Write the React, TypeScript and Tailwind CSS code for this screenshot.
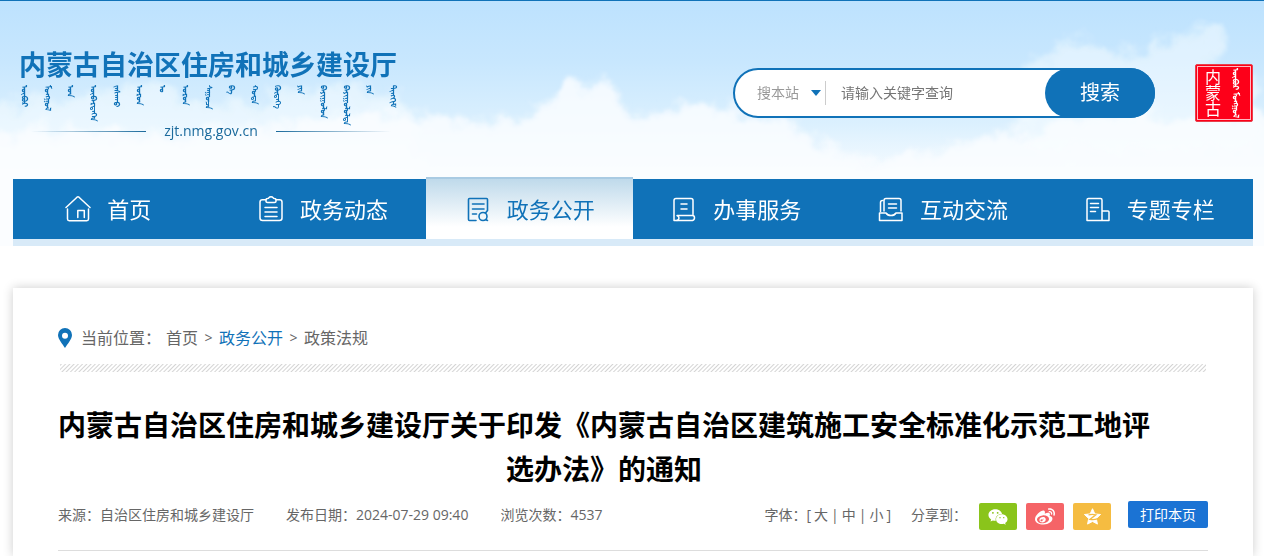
import React, { useState } from 'react';
import { FaWeixin, FaWeibo } from 'react-icons/fa';

interface IconProps {
  className?: string;
}

const HomeIcon: React.FC<IconProps> = ({ className }) => (
  <svg className={className} viewBox="0 0 26 26" fill="none" stroke="currentColor" strokeWidth="1.5" strokeLinecap="round" strokeLinejoin="round">
    <path d="M1 11.5 12 1.2q1-.8 2 0L25 11.5" />
    <path d="M2.500 13v10q0 1.700 1.700 1.700h17.600q1.700 0 1.700-1.700V13" />
    <path d="M12.800 21.500v-7h6.500v7" />
  </svg>
);

const ClipboardIcon: React.FC<IconProps> = ({ className }) => (
  <svg className={className} viewBox="0 0 26 26" fill="none" stroke="currentColor" strokeWidth="1.5" strokeLinecap="round" strokeLinejoin="round">
    <path d="M8 3.800H4.500Q2 3.800 2 6v16q0 2.500 2.500 2.500h17q2.500 0 2.500-2.500V6q0-2.200-2.500-2.200H18" />
    <path d="M8 3.800Q8 2.600 9.400 2.600 10.500 2.500 11 1.600q.5-.8 2-.8t2 .8q.5.900 1.600 1 1.400 0 1.400 1.200v1.400q0 1.200-1.500 1.200h-7Q8 6.400 8 5.200z" />
    <path d="M7 11.500h12M7 16h12M7 20.500h12" />
  </svg>
);

const OpenIcon: React.FC<IconProps> = ({ className }) => (
  <svg className={className} viewBox="0 0 26 26" fill="none" stroke="currentColor" strokeWidth="1.6" strokeLinecap="round" strokeLinejoin="round">
    <path d="M11 24.500H4.500q-1 0-1-1v-20q0-1 1-1h17q1 0 1 1V14" />
    <path d="M7.500 8h11.500M7.500 13h11.500M7.500 18h4" />
    <circle cx="18" cy="20.500" r="4" />
    <path d="m20.500 17 2-2.500M20.500 23.500l2 1" />
  </svg>
);

const ServiceIcon: React.FC<IconProps> = ({ className }) => (
  <svg className={className} viewBox="0 0 26 26" fill="none" stroke="currentColor" strokeWidth="1.5" strokeLinecap="round" strokeLinejoin="round">
    <path d="M22 18.500v-14q0-2-2-2H5q-2 0-2 2v20h3" />
    <path d="M6 19.500h15.500q2 0 2 2.300t-2 2.700H6q2-1.200 2-2.500 0-1.500-2-2.500z" />
    <path d="M10 8h6M10 13h6" />
  </svg>
);

const ChatIcon: React.FC<IconProps> = ({ className }) => (
  <svg className={className} viewBox="0 0 26 26" fill="none" stroke="currentColor" strokeWidth="1.5" strokeLinecap="round" strokeLinejoin="round">
    <path d="M2.500 15.500V6.500Q2.500 4.500 4.500 4.500M6 15V4.500q0-2 2-2h13q2 0 2 2V15" />
    <path d="M1.500 17h6.500q1.500 2.500 5 2.500t5-2.500h6v7.500h-22.500z" />
    <path d="M10.500 8h8M10.500 12h8" />
  </svg>
);

const TopicIcon: React.FC<IconProps> = ({ className }) => (
  <svg className={className} viewBox="0 0 26 26" fill="none" stroke="currentColor" strokeWidth="1.5" strokeLinecap="round" strokeLinejoin="round">
    <path d="M17 24V4q0-1.500-1.500-1.500H3.500Q2 2.500 2 4v20.500h22V16q0-1-1-1h-6" />
    <path d="M5.500 7.500h8M5.500 11.500h8M5.500 15.500h5" />
  </svg>
);

const PinIcon: React.FC<IconProps> = ({ className }) => (
  <svg className={className} viewBox="0 0 14 20" fill="currentColor">
    <path fillRule="evenodd" d="M7 0a7 7 0 0 0-7 7c0 4 4.500 9 7 13 2.500-4 7-9 7-13a7 7 0 0 0-7-7zm0 4.800a3 3 0 1 1 0 6 3 3 0 0 1 0-6z" />
  </svg>
);

const QzoneIcon: React.FC<IconProps> = ({ className }) => (
  <svg className={className} viewBox="0 0 20 20">
    <path fill="currentColor" strokeLinejoin="round" stroke="currentColor" d="m10 1.800 2.500 5.500 6 .6-4.500 4.200 1.200 5.900L10 15.200 4.800 18 6 12.100 1.500 7.900l6-.6z" />
    <path fill="none" stroke="#f5bc41" strokeWidth="1.400" d="M5.800 8.300q4-.9 7.700 0L7.300 13q3.800.7 7.700-.4" />
  </svg>
);

const navItems = [
  { label: '首页', Icon: HomeIcon },
  { label: '政务动态', Icon: ClipboardIcon },
  { label: '政务公开', Icon: OpenIcon, active: true },
  { label: '办事服务', Icon: ServiceIcon },
  { label: '互动交流', Icon: ChatIcon },
  { label: '专题专栏', Icon: TopicIcon },
];

const mongolianWords = [
  'ᠥᠪᠥᠷ', 'ᠮᠣᠩᠭᠣᠯ', 'ᠤᠨ', 'ᠥᠪᠡᠷᠲᠡᠭᠡᠨ', 'ᠵᠠᠰᠠᠬᠤ', 'ᠣᠷᠣᠨ', 'ᠤ', 'ᠣᠷᠣᠨ', 'ᠰᠠᠭᠤᠴᠠ',
  'ᠪᠠ', 'ᠬᠣᠲᠠ', 'ᠬᠥᠳᠡᠭᠡ', 'ᠶᠢᠨ', 'ᠪᠠᠶᠢᠭᠤᠯᠤᠨ', 'ᠪᠠᠶᠢᠭᠤᠯᠤᠯᠲᠠ', 'ᠶᠢᠨ', 'ᠲᠢᠩᠬᠢᠮ',
];

const Clouds: React.FC = () => (
  <svg className="absolute inset-0 w-full h-full" viewBox="0 0 1264 245" preserveAspectRatio="none" aria-hidden="true">
    <defs>
      <linearGradient id="sky" x1="0" y1="0" x2="0" y2="1">
        <stop offset="0" stopColor="#bde2fe" />
        <stop offset="0.25" stopColor="#c8e7fe" />
        <stop offset="0.5" stopColor="#dbf0fe" />
        <stop offset="0.72" stopColor="#f8fcff" />
        <stop offset="0.95" stopColor="#ffffff" />
      </linearGradient>
      <filter id="puff" x="-10%" y="-20%" width="120%" height="140%">
        <feTurbulence type="fractalNoise" baseFrequency="0.04" numOctaves="5" seed="11" result="noise" />
        <feGaussianBlur in="SourceGraphic" stdDeviation="4" result="soft" />
        <feDisplacementMap in="soft" in2="noise" scale="36" xChannelSelector="R" yChannelSelector="G" result="shape" />
        <feGaussianBlur in="shape" stdDeviation="1" />
      </filter>
    </defs>
    <rect width="1264" height="245" fill="url(#sky)" />
    <g fill="#fafdff" filter="url(#puff)">
      <path opacity="0.5" d="M-40 105 60 98 110 88 150 84 190 100 260 104 300 88 350 84 400 100 420 116V290H-40z" />
      <path opacity="0.85" d="M-40 138 60 128 180 134 300 118 360 108 420 116 480 120 520 118 536 104 556 98 566 80 604 80 616 102 636 118 680 102 720 108 780 116 830 150 880 164 960 140 1050 122 1120 108 1180 118 1300 104V290H-40z" />
      <path opacity="0.5" d="m1000 74 22-10 24-4 22-20 40 4 26 10 30-14 20-4 20-16 14 2 10 20-10 26 40 10V150H1030z" />
    </g>
  </svg>
);

const Logo: React.FC = () => (
  <a href="#" className="block w-[384px] text-[#1072b8]">
    <div className="text-[27px] leading-8 font-bold whitespace-nowrap">内蒙古自治区住房和城乡建设厅</div>
    <div lang="mn" className="flex justify-between h-9 mt-1 pr-1">
      {mongolianWords.map((word, i) => (
        <span key={i} className="text-[8px] leading-3 font-bold [writing-mode:vertical-lr]">{word}</span>
      ))}
    </div>
    <div className="flex items-center gap-[18px] px-3 text-sm leading-5 text-[#1b6a9c]">
      <span className="flex-1 h-px bg-linear-to-l from-[#1b6a9c] to-transparent" />
      zjt.nmg.gov.cn
      <span className="flex-1 h-px bg-linear-to-r from-[#1b6a9c] to-transparent" />
    </div>
  </a>
);

const SearchBox: React.FC = () => {
  const [keyword, setKeyword] = useState('');

  return (
    <form className="flex w-[422px] h-[50px] rounded-full border-2 border-[#1072b8] bg-white text-sm" onSubmit={e => e.preventDefault()}>
      <div className="relative flex items-center pl-[22px]">
        <select aria-label="搜索范围" className="appearance-none w-16 h-6 text-[#999] bg-transparent focus:outline-none">
          <option>搜本站</option>
          <option>搜全区</option>
        </select>
        <svg className="absolute right-0 w-[10px] h-[6px] text-[#1072b8] pointer-events-none" viewBox="0 0 10 6" fill="currentColor">
          <path d="M0 0h10L5 6z" />
        </svg>
      </div>
      <span className="w-px h-6 ml-1 mt-[11px] bg-[#ccc]" />
      <input
        type="text"
        aria-label="关键字"
        value={keyword}
        onChange={e => setKeyword(e.target.value)}
        placeholder="请输入关键字查询"
        className="flex-1 min-w-0 px-[15px] bg-transparent placeholder:text-[#757575] focus:outline-none"
      />
      <button type="submit" className="w-[110px] -my-[2px] -mr-[2px] rounded-full bg-[#1072b8] text-white text-xl">搜索</button>
    </form>
  );
};

const Seal: React.FC = () => (
  <a href="#" className="flex justify-center items-center gap-1 w-[58px] h-[58px] rounded-xs bg-[#fd0019] text-white border border-[#e8404c] outline -outline-offset-3 outline-[#ffb9c0] whitespace-nowrap">
    <span className="[writing-mode:vertical-rl] text-base leading-5">内蒙古</span>
    <span lang="mn" className="[writing-mode:vertical-lr] text-[8px] leading-5 font-bold">ᠥᠪᠥᠷ ᠮᠣᠩᠭᠣᠯ</span>
  </a>
);

const Nav: React.FC = () => (
  <nav className="grid grid-cols-6 h-[67px] bg-[#1072b8] text-[22px] text-white border-b-7 border-[#d8eaf8]">
    {navItems.map(({ label, Icon, active }) => (
      <a
        key={label}
        href="#"
        className={
          active
            ? 'flex items-center justify-center gap-4 -mt-[2px] text-[#1072b8] border-t-2 border-[#a9cbe3] bg-linear-to-b from-[#bfdaeb] to-white to-80%'
            : 'flex items-center justify-center gap-4 first:pr-4'
        }
      >
        <Icon className="w-[26px] h-[26px]" />
        {label}
      </a>
    ))}
  </nav>
);

const Breadcrumb: React.FC = () => (
  <div className="flex items-center h-6 text-base text-[#666]">
    <PinIcon className="w-[14px] h-5 mr-[9px] text-[#1072b8]" />
    <span className="mr-[5px]">当前位置：</span>
    <a href="#">首页</a>
    <span className="w-[21px] text-center text-sm">&gt;</span>
    <a href="#" className="text-[#1072b8]">政务公开</a>
    <span className="w-[21px] text-center text-sm">&gt;</span>
    <a href="#">政策法规</a>
  </div>
);

const MetaBar: React.FC = () => (
  <div className="flex items-center justify-between h-[60px] pb-3 text-sm text-[#666] border-b border-[#ddd] whitespace-nowrap">
    <div className="flex gap-8">
      <span>来源：自治区住房和城乡建设厅</span>
      <span>发布日期：2024-07-29 09:40</span>
      <span>浏览次数：4537</span>
    </div>
    <div className="flex items-center">
      <div className="flex gap-[3px]">
        <span>字体：[</span>
        <button type="button">大</button>
        <span>|</span>
        <button type="button">中</button>
        <span>|</span>
        <button type="button">小</button>
        <span>]</span>
      </div>
      <span className="ml-5 mr-3">分享到：</span>
      <div className="flex gap-[9px] pt-1 text-white">
        <a href="#" aria-label="微信" className="flex items-center justify-center w-[38px] h-[27px] rounded-xs bg-[#8ac41b]">
          <FaWeixin className="w-5 h-5" />
        </a>
        <a href="#" aria-label="微博" className="flex items-center justify-center w-[38px] h-[27px] rounded-xs bg-[#f56467]">
          <FaWeibo className="w-5 h-5" />
        </a>
        <a href="#" aria-label="QQ空间" className="flex items-center justify-center w-[38px] h-[27px] rounded-xs bg-[#f5bc41]">
          <QzoneIcon className="w-[19px] h-[19px]" />
        </a>
      </div>
      <button type="button" className="ml-[17px] w-20 h-[27px] rounded-xs bg-[#1b73d4] text-white">打印本页</button>
    </div>
  </div>
);

const App: React.FC = () => {
  return (
    <div className="flex flex-col min-h-screen bg-white font-['Open_Sans','Noto_Sans_CJK_SC',sans-serif]">
      <header className="relative border-t border-[#1072b8]">
        <Clouds />
        <div className="relative max-w-[1264px] mx-auto pl-[13px] pr-[11px]">
          <div className="flex items-start justify-between h-[178px] pl-[6px] pt-12">
            <Logo />
            <div className="flex items-center gap-10 pt-[15px]">
              <SearchBox />
              <Seal />
            </div>
          </div>
          <Nav />
        </div>
      </header>

      <main className="flex flex-col flex-1 w-full max-w-[1264px] mx-auto pl-[13px] pr-[11px] pt-[42px]">
        <article className="flex-1 px-[45px] pt-[38px] bg-white shadow-[0_0_10px_rgba(0,0,0,0.2)]">
          <Breadcrumb />
          <div className="h-2 mt-[14px] mx-[2px] bg-[repeating-linear-gradient(135deg,#fff_0,#d4d4d4_1px,#fff_2px,#fff_3px)]" />
          <h1 className="mt-[31px] pr-[58px] text-[28px] leading-11 font-bold text-black text-center">
            内蒙古自治区住房和城乡建设厅关于印发《内蒙古自治区建筑施工安全标准化示范工地评选办法》的通知
          </h1>
          <MetaBar />
        </article>
      </main>
    </div>
  );
};

export default App;
